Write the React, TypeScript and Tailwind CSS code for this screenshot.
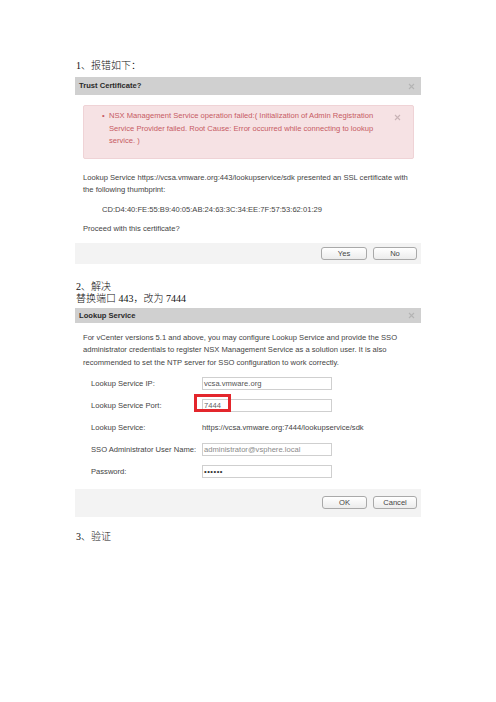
import React from 'react';

// Small dialog pieces in the old vSphere web-client look
const ui = { fontFamily: '"Liberation Sans", Arial, sans-serif' };
const cjk = { fontFamily: '"Liberation Serif", "Noto Sans CJK SC", serif' };

function CloseMark({ className = '' }: { className?: string }) {
  return (
    <svg width="7" height="7" viewBox="0 0 7 7" className={className}>
      <path d="M1 1 L6 6 M6 1 L1 6" stroke="currentColor" strokeWidth="1.1" />
    </svg>
  );
}

function DialogHeader({ title, height }: { title: string; height: string }) {
  return (
    <div className={`flex items-center justify-between bg-[#d0d0d0] pl-[4px] pr-[6px] ${height}`}>
      <span className="text-[7.6px] font-bold text-[#2a2a2a]">{title}</span>
      <CloseMark className="text-[#b4b4b4]" />
    </div>
  );
}

function Button({ label, width }: { label: string; width: string }) {
  return (
    <button
      type="button"
      className={`flex h-[13px] items-center justify-center rounded-[3px] border border-[#a9a9a9] bg-gradient-to-b from-white to-[#ececec] text-[7.6px] text-[#444] ${width}`}
    >
      {label}
    </button>
  );
}

function Field({ label, children }: { label: string; children: React.ReactNode }) {
  return (
    <div className="flex h-[22px] items-center">
      <span className="w-[111px] shrink-0 text-[7.6px] text-[#444]">{label}</span>
      {children}
    </div>
  );
}

function TextBox({ value, tone = 'text-[#555]' }: { value: string; tone?: string }) {
  return (
    <div className={`flex h-[13px] w-[130px] items-center border border-[#cfcfcf] bg-white pl-[1px] text-[7.6px] ${tone}`}>
      {value}
    </div>
  );
}

export default function App() {
  return (
    <div className="min-h-[702px] w-[496px] bg-white pl-[75px] pt-[60px]" style={ui}>
      <div className="pl-[1px] text-[10px] font-light leading-[12px] text-[#111]" style={cjk}>
        1、报错如下：
      </div>

      {/* Trust Certificate dialog */}
      <div className="mt-[5px] w-[346px] bg-white">
        <DialogHeader title="Trust Certificate?" height="h-[18px]" />

        <div className="pt-[10px]">
          <div className="relative ml-[8px] h-[54px] w-[331px] rounded-[2px] border border-[#efd3d6] bg-[#f6e2e4] pt-[4px] text-[7.6px] leading-[12.5px] text-[#c65a63]">
            <div className="flex pl-[18px]">
              <span className="w-[7px] shrink-0">•</span>
              <p>
                NSX Management Service operation failed:( Initialization of Admin Registration
                <br />
                Service Provider failed. Root Cause: Error occurred while connecting to lookup
                <br />
                service. )
              </p>
            </div>
            <CloseMark className="absolute right-[12px] top-[8px] text-[#c9b3b6]" />
          </div>

          <div className="mt-[13px] pl-[8px] text-[7.6px] leading-[12px] text-[#444]">
            <p>
              Lookup Service https://vcsa.vmware.org:443/lookupservice/sdk presented an SSL certificate with
              <br />
              the following thumbprint:
            </p>
            <p className="mt-[8px] pl-[19px]">CD:D4:40:FE:55:B9:40:05:AB:24:63:3C:34:EE:7F:57:53:62:01:29</p>
            <p className="mt-[7px]">Proceed with this certificate?</p>
          </div>

          <div className="mt-[8px] flex h-[21px] items-center justify-end gap-[6px] bg-[#f3f3f3] pr-[4px]">
            <Button label="Yes" width="w-[46px]" />
            <Button label="No" width="w-[44px]" />
          </div>
        </div>
      </div>

      <div className="mt-[17px] pl-[1px] text-[10px] font-light leading-[12px] text-[#111]" style={cjk}>
        <p>2、解决</p>
        <p>替换端口 443，改为 7444</p>
      </div>

      {/* Lookup Service dialog */}
      <div className="mt-[3px] w-[346px] bg-white">
        <DialogHeader title="Lookup Service" height="h-[15px]" />

        <p className="mt-[9px] pl-[8px] text-[7.6px] leading-[12.3px] text-[#444]">
          For vCenter versions 5.1 and above, you may configure Lookup Service and provide the SSO
          <br />
          administrator credentials to register NSX Management Service as a solution user. It is also
          <br />
          recommended to set the NTP server for SSO configuration to work correctly.
        </p>

        <div className="mt-[4px] pl-[16px]">
          <Field label="Lookup Service IP:">
            <TextBox value="vcsa.vmware.org" />
          </Field>
          <Field label="Lookup Service Port:">
            <div className="relative">
              <TextBox value="7444" tone="text-[#666]" />
              <div className="absolute left-[-8px] top-[-5px] h-[18px] w-[37px] border-[3px] border-[#e3262c]" />
            </div>
          </Field>
          <Field label="Lookup Service:">
            <span className="text-[7.6px] text-[#444]">https://vcsa.vmware.org:7444/lookupservice/sdk</span>
          </Field>
          <Field label="SSO Administrator User Name:">
            <TextBox value="administrator@vsphere.local" tone="text-[#8a8a8a]" />
          </Field>
          <Field label="Password:">
            <TextBox value="••••••" tone="text-[#333] tracking-[0.5px]" />
          </Field>
        </div>

        <div className="mt-[6px] flex h-[28px] items-center justify-end gap-[6px] bg-[#f3f3f3] pr-[4px]">
          <Button label="OK" width="w-[45px]" />
          <Button label="Cancel" width="w-[44px]" />
        </div>
      </div>

      <div className="mt-[14px] pl-[1px] text-[10px] font-light leading-[12px] text-[#111]" style={cjk}>
        3、验证
      </div>
    </div>
  );
}
